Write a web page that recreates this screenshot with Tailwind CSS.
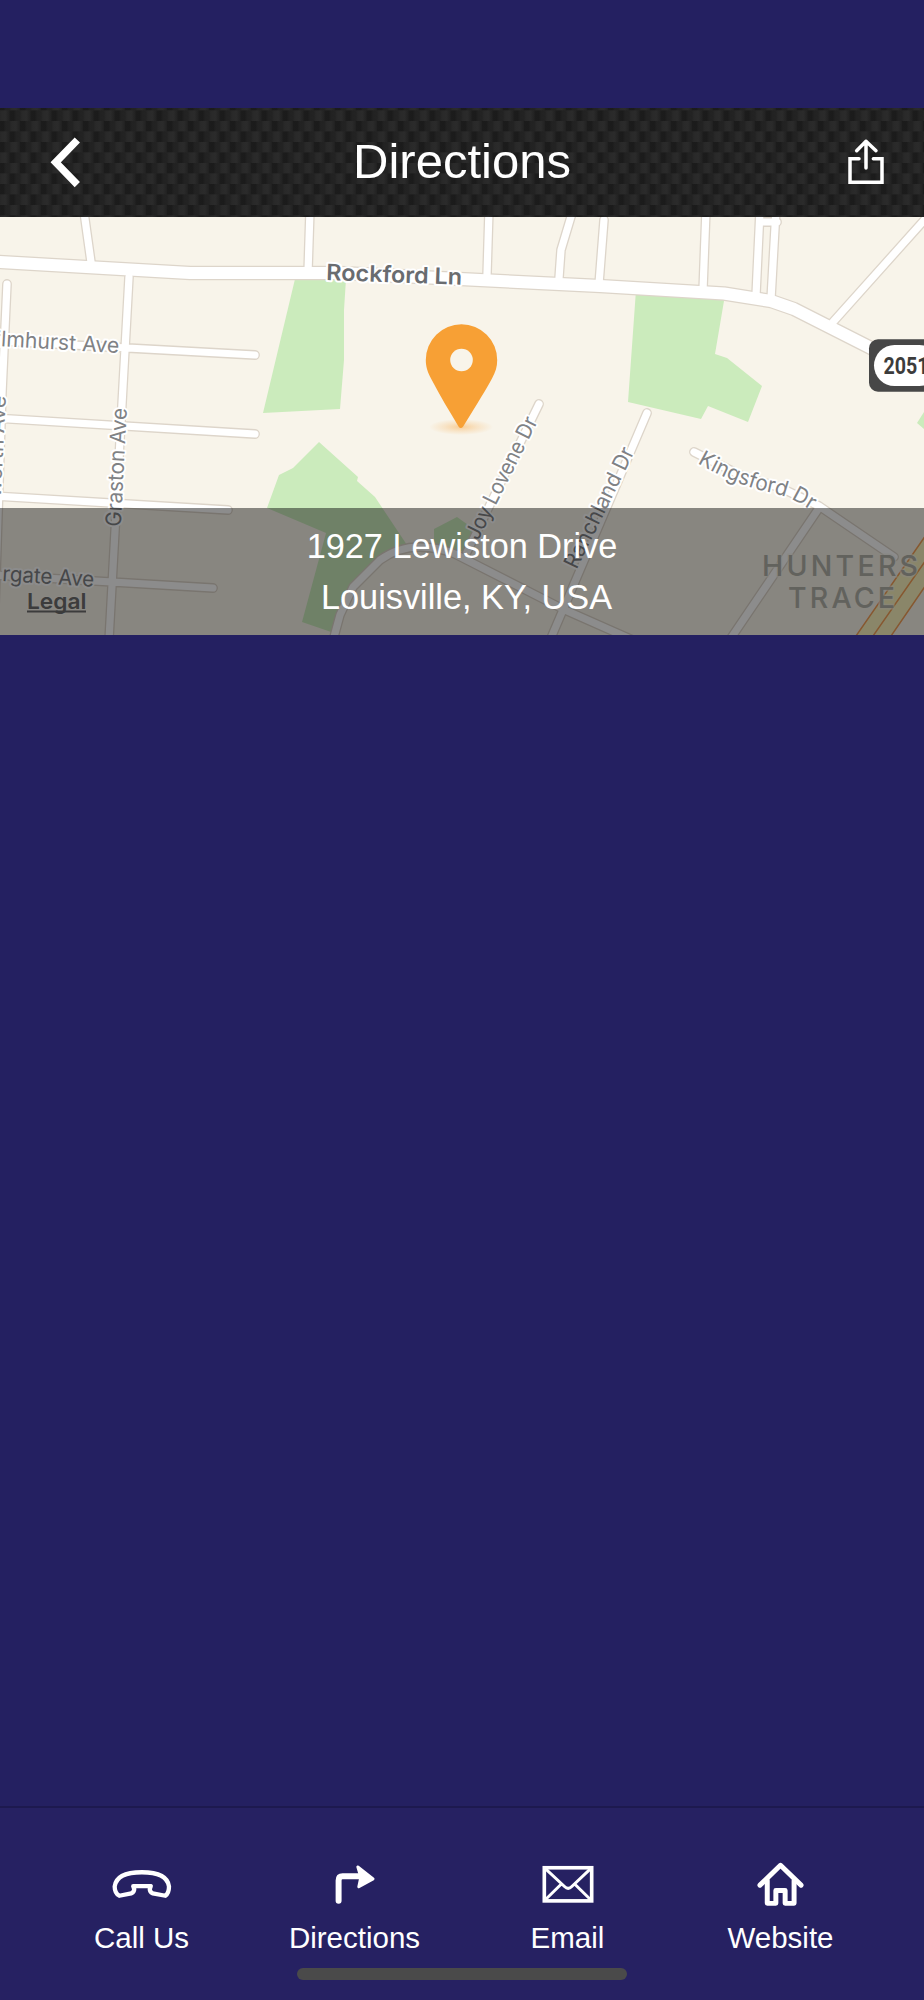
<!DOCTYPE html>
<html lang="en">
<head>
    <meta charset="UTF-8">
    <meta name="viewport" content="width=device-width, initial-scale=1.0">
    <title>Directions</title>
    <script src="https://cdn.jsdelivr.net/npm/@tailwindcss/browser@4"></script>
</head>
<body class="bg-[#242061] font-['Liberation_Sans',Arial,sans-serif] text-white">
    <div class="flex h-[2000px] w-[924px] flex-col overflow-hidden pt-[108px]">
        <!-- Header -->
        <header class="relative h-[109px] shrink-0 bg-[#232323]">
            <svg class="absolute inset-0 h-full w-full">
                <defs>
                    <linearGradient id="weave">
                        <stop offset="0" stop-color="#1c1c1c" />
                        <stop offset="0.2" stop-color="#1b1b1b" />
                        <stop offset="0.32" stop-color="#222222" />
                        <stop offset="0.5" stop-color="#232323" />
                        <stop offset="0.6" stop-color="#292929" />
                        <stop offset="0.8" stop-color="#2b2b2b" />
                        <stop offset="1" stop-color="#212121" />
                    </linearGradient>
                    <pattern id="carbon" width="21" height="21" patternUnits="userSpaceOnUse" x="-1" y="13">
                        <rect width="21" height="10.5" fill="url(#weave)" />
                        <rect x="-10.5" y="10.5" width="21" height="10.5" fill="url(#weave)" />
                        <rect x="10.5" y="10.5" width="21" height="10.5" fill="url(#weave)" />
                    </pattern>
                </defs>
                <rect width="924" height="109" fill="url(#carbon)" />
            </svg>
            <div class="relative grid h-full grid-cols-[1fr_auto_1fr] items-center">
                <button class="justify-self-start pl-[47px]">
                    <svg class="h-[54px] w-[36px]" viewBox="144 107 108 162" fill="none" stroke="white" stroke-width="22">
                        <path d="M235 119 170 186 235 253" />
                    </svg>
                </button>
                <h1 class="pb-[3px] text-[49px] leading-none">Directions</h1>
                <button class="justify-self-end pr-[37px]">
                    <svg class="h-[50px] w-[42px]" viewBox="693 114 126 150" fill="none" stroke="white" stroke-width="10.500" stroke-linecap="round">
                        <path d="M735 176H708V247H804V176H778" />
                        <path d="M756 204V124M728 152 756 124 786 152" stroke-linejoin="round" />
                    </svg>
                </button>
            </div>
        </header>

        <!-- Map -->
        <section class="relative h-[418px] shrink-0">
            <svg class="block h-full w-full" viewBox="0 217 924 418" font-family="Inter, sans-serif">
                <defs>
                    <g id="streets">
                        <path d="M84 212 91 262M129 277 109 640M7 284 2 393-8 700M0 341 255 355M-5 418 255 434M-5 496 228 510M-5 575 213 588" />
                        <path d="M310 210 308 272M489 210 487 275M573 210 561 250 559 278M604 220 599 284M706 210 703 290M760 210 756 295M776 210 771 299M760 222H777M927 217 833 322" />
                        <path d="M539 404 467 552M647 413 548 645M334 637 340 615 353 587 380 560Q398 547 420 547 438 547 455 554L565 610 635 641" />
                        <path d="M694 452 740 475 781 488 819 506 894 557M819 508 729 641" />
                    </g>
                    <path id="rockford" d="M-10 261.500 190 273H340L600 286 724 293.500 771 301 794 309 869 347 940 384" />
                    <path id="kingsford" d="M697 463C724 478 745 487 768 492 788 496 798 502 820 516" />
                    <radialGradient id="pinShadow">
                        <stop offset="0" stop-color="#f7a035" stop-opacity="0.45" />
                        <stop offset="0.5" stop-color="#f7a035" stop-opacity="0.2" />
                        <stop offset="1" stop-color="#f7a035" stop-opacity="0" />
                    </radialGradient>
                </defs>
                <rect y="217" width="924" height="418" fill="#f8f4ea" />

                <!-- Parks -->
                <g fill="#cbebbc">
                    <path d="M295 279H346L344 310V360L340 409 263 413Z" />
                    <path d="M319 442 358 477 357 481 375 497 407 545 380 560 353 587 334 633 302 622 326 533 267 508 279 475 293 468Z" />
                    <path d="M457 517 434 529V548L467 552 478 532Z" />
                    <path d="M636 290 725 295 715 354 727 358 762 386 748 422 708 406 701 419 628 402Z" />
                    <path d="M917 423 924 412V429Z" />
                </g>

                <!-- Highway -->
                <path d="M856 636 924 538V588L891 636Z" fill="#fbf5c0" />
                <path d="M856 636 926 535M873 636 926 560M891 636 926 585" stroke="#f5a058" stroke-width="1.500" fill="none" />

                <!-- Streets: outline first, then the white fill -->
                <g fill="none" stroke-linecap="round" stroke-linejoin="round">
                    <use href="#streets" stroke="#ddd5ca" stroke-width="9.800" />
                    <use href="#rockford" stroke="#ddd5ca" stroke-width="14.500" />
                    <use href="#streets" stroke="#fff" stroke-width="7.200" />
                    <use href="#rockford" stroke="#fff" stroke-width="12" />
                </g>

                <!-- Street names -->
                <g font-size="21.500" font-weight="400" fill="#808285" stroke="#fff" stroke-width="4" stroke-linejoin="round" paint-order="stroke">
                    <text transform="translate(-12 345.500) rotate(3.3)" textLength="131" lengthAdjust="spacingAndGlyphs">Elmhurst Ave</text>
                    <text transform="translate(120.700 527) rotate(-87)" textLength="119" lengthAdjust="spacingAndGlyphs">Graston Ave</text>
                    <text transform="translate(6 396) rotate(-87)" text-anchor="end">worth Ave</text>
                    <text transform="translate(478 541) rotate(-63.400)" textLength="134" lengthAdjust="spacingAndGlyphs">Joy Lovene Dr</text>
                    <text transform="translate(576.500 570) rotate(-63.800)" textLength="132" lengthAdjust="spacingAndGlyphs">Ranchland Dr</text>
                    <text textLength="124" lengthAdjust="spacingAndGlyphs"><textPath href="#kingsford" textLength="124" lengthAdjust="spacingAndGlyphs">Kingsford Dr</textPath></text>
                    <text transform="translate(2 581) rotate(3.500)" textLength="92" lengthAdjust="spacingAndGlyphs">rgate Ave</text>
                    <text transform="translate(326 280) rotate(2)" font-size="22.500" font-weight="600" fill="#696c70" textLength="136" lengthAdjust="spacingAndGlyphs">Rockford Ln</text>
                </g>
                <g font-size="28.500" font-weight="500" fill="#b2b2aa" stroke="#f8f4ea" stroke-opacity="0.600" stroke-width="3" paint-order="stroke">
                    <text x="762" y="576" textLength="156">HUNTERS</text>
                    <text x="788" y="607.500" textLength="107">TRACE</text>
                </g>

                <!-- Route shield -->
                <rect x="869" y="339.300" width="76" height="52.400" rx="9" fill="#474747" />
                <rect x="874" y="345" width="66" height="41" rx="20.500" fill="#fff" />
                <text x="883.500" y="374.300" font-family="Roboto, sans-serif" font-size="24" font-weight="700" fill="#3c3c3c" textLength="45" lengthAdjust="spacingAndGlyphs">2051</text>

                <text x="27" y="608.500" font-size="22" font-weight="600" fill="#6d6d6d" stroke="#fff" stroke-opacity="0.300" stroke-width="2" paint-order="stroke" textLength="59.500" lengthAdjust="spacingAndGlyphs">Legal</text>
                <rect x="27" y="610.500" width="59" height="2" fill="#6d6d6d" />

                <!-- Pin -->
                <ellipse cx="461" cy="427" rx="32" ry="8" fill="url(#pinShadow)" />
                <path d="M461.500 324.300A35.700 35.700 0 0 1 497.200 360C497.200 367 495.500 372 492 378.500 483 395 472 412 463.200 426.500Q460.800 429.500 458.500 426.500C450 412 440 396 431 378.500 427.500 371.500 425.800 367 425.800 360A35.700 35.700 0 0 1 461.500 324.300Z" fill="#f7a035" />
                <circle cx="461.500" cy="360" r="11.300" fill="#f8f4ea" />
            </svg>
            <!-- Address over the lower part of the map -->
            <div class="absolute inset-x-0 bottom-0 flex h-[127.500px] flex-col items-center bg-black/45 pt-[13px] text-[34.300px] leading-[51.500px]">
                <p>1927 Lewiston Drive</p>
                <p class="pl-[9px]">Louisville, KY, USA</p>
            </div>
        </section>

        <!-- Tab bar -->
        <nav class="mt-auto flex h-[194px] shrink-0 flex-col border-t-2 border-[#1d194f] bg-[#262162]">
            <div class="grid grid-cols-4 pt-[48px] pr-[37px] pl-[35px] text-[29.500px] leading-[34px]">
                <a class="flex flex-col items-center gap-[12px]">
                    <svg class="h-[53px] w-[67px]" viewBox="146 198 200 160" fill="none" stroke="white" stroke-width="13" stroke-linejoin="round">
                        <path d="M179 318Q165 310 165 290C169 259 204 247 247 247S325 259 329 290Q329 310 318 318L280 311Q271 306 271 298L274 289H221L224 298Q224 306 215 311Z" />
                    </svg>
                    Call Us
                </a>
                <a class="flex flex-col items-center gap-[12px]">
                    <svg class="h-[53px] w-[67px]" viewBox="785 198 200 160" fill="none" stroke="white" stroke-linecap="round" stroke-linejoin="round">
                        <path d="M837 333V272Q837 259 849 259H905" stroke-width="18" />
                        <path d="M895 231 941 267 898 291 904 262Z" fill="white" stroke-width="9" />
                    </svg>
                    Directions
                </a>
                <a class="flex flex-col items-center gap-[12px]">
                    <svg class="h-[53px] w-[67px]" viewBox="224 198 200 160" fill="none" stroke="white">
                        <rect x="254" y="233.500" width="143" height="100" stroke-width="11" />
                        <path d="M257 236 315 290Q326 301 337 290L394 236M257 330 304 284M394 330 347 284" stroke-width="9" />
                    </svg>
                    Email
                </a>
                <a class="flex flex-col items-center gap-[12px]">
                    <svg class="h-[53px] w-[67px]" viewBox="863 198 200 160" fill="none" stroke="white" stroke-width="15" stroke-linecap="round" stroke-linejoin="round">
                        <path d="M901 286 963 226 1025 286" />
                        <path d="M923 272V341H949V302H977V341H1004V272" />
                    </svg>
                    Website
                </a>
            </div>
            <div class="mx-auto mt-[13px] h-[12px] w-[330px] rounded-full bg-[#4a4a4a]"></div>
        </nav>
    </div>
</body>
</html>
